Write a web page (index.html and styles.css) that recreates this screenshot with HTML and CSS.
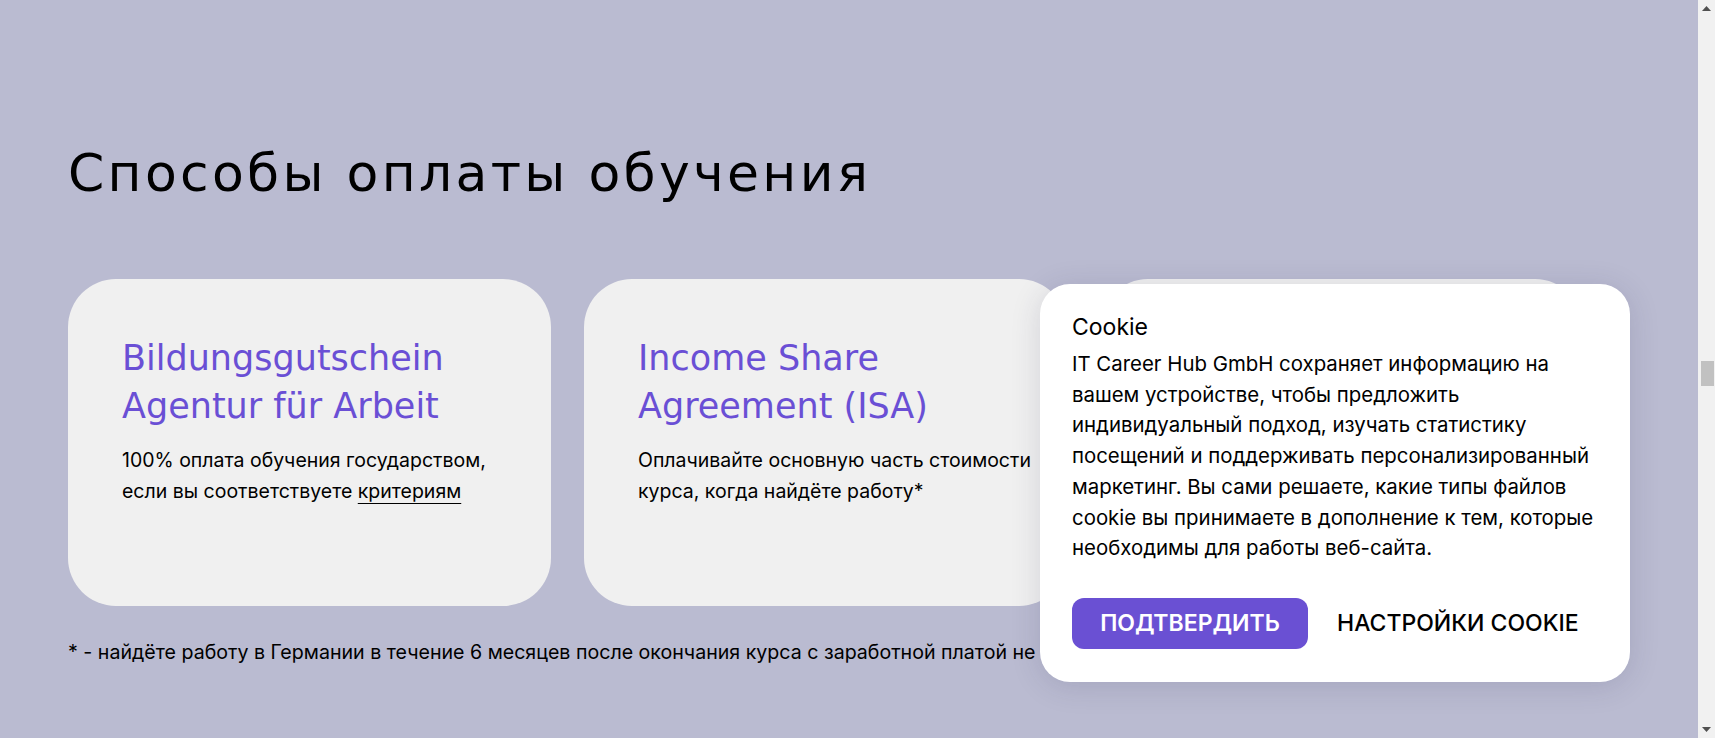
FILE: index.html
```html
<!DOCTYPE html>
<html lang="ru">
<head>
<meta charset="utf-8">
<title>Способы оплаты обучения</title>
<link rel="stylesheet" href="styles.css">
</head>
<body>
<div class="page">
  <main class="main">
    <h1 class="heading">Способы оплаты обучения</h1>
    <div class="cards">
      <div class="card">
        <h3 class="card-title">Bildungsgutschein Agentur für Arbeit</h3>
        <p class="card-text">100% оплата обучения государством, если вы соответствуете <a class="link" href="#">критериям</a></p>
      </div>
      <div class="card">
        <h3 class="card-title">Income Share Agreement (ISA)</h3>
        <p class="card-text">Оплачивайте основную часть стоимости курса, когда найдёте работу*</p>
      </div>
      <div class="card">
        <h3 class="card-title">Рассрочка от IT Career Hub</h3>
        <p class="card-text">Оплачивайте обучение частями без переплат</p>
      </div>
    </div>
    <p class="footnote">* - найдёте работу в Германии в течение 6 месяцев после окончания курса с заработной платой не менее 40 000 евро в год</p>

    <div class="cookie">
      <div class="cookie-title">Cookie</div>
      <p class="cookie-text">IT Career Hub GmbH сохраняет информацию на<br>
        вашем устройстве, чтобы предложить<br>
        индивидуальный подход, изучать статистику<br>
        посещений и поддерживать персонализированный<br>
        маркетинг. Вы сами решаете, какие типы файлов<br>
        cookie вы принимаете в дополнение к тем, которые<br>
        необходимы для работы веб-сайта.</p>
      <div class="cookie-actions">
        <button class="btn-primary">ПОДТВЕРДИТЬ</button>
        <button class="btn-link">НАСТРОЙКИ COOKIE</button>
      </div>
    </div>
  </main>
  <aside class="scrollbar">
    <div class="arrow"><svg width="9" height="5" viewBox="0 0 9 5"><path d="M0 5 L4.5 0 L9 5 Z" fill="#505050"/></svg></div>
    <div class="track"><div class="thumb"></div></div>
    <div class="arrow"><svg width="9" height="5" viewBox="0 0 9 5"><path d="M0 0 L9 0 L4.5 5 Z" fill="#505050"/></svg></div>
  </aside>
</div>
</body>
</html>
```

FILE: styles.css
```css
* { box-sizing: border-box; }
html, body {
  margin: 0;
  height: 738px;
  overflow: hidden;
}
body {
  font-family: Inter, "Noto Sans", sans-serif;
  color: #000;
}
.page {
  display: flex;
  height: 738px;
}
.main {
  flex: 1;
  position: relative;
  background: #babbd1;
  padding: 142px 0 0 68px;
  overflow: hidden;
}
.heading {
  margin: 0;
  font-family: "DejaVu Sans", sans-serif;
  font-weight: 400;
  font-size: 52px;
  line-height: 62px;
  letter-spacing: 3.3px;
}
.cards {
  display: grid;
  grid-template-columns: repeat(3, 483px);
  gap: 33px;
  margin-top: 75px;
}
.card {
  background: #f0f0f0;
  border-radius: 48px;
  height: 327px;
  padding: 55px 30px 0 54px;
}
.card-title {
  margin: 0;
  font-family: "DejaVu Sans", sans-serif;
  font-weight: 400;
  font-size: 35px;
  line-height: 48px;
  color: #6a4fd5;
}
.card-text {
  margin: 15px 0 0;
  font-size: 19.5px;
  line-height: 31px;
}
.link {
  color: #000;
  text-decoration: underline;
  text-underline-offset: 5px;
  text-decoration-thickness: 1px;
}
.footnote {
  margin: 34px 0 0;
  font-size: 19.6px;
  line-height: 24px;
  white-space: nowrap;
}
.cookie {
  position: absolute;
  right: 68px;
  bottom: 56px;
  width: 590px;
  height: 398px;
  background: #fff;
  border-radius: 30px;
  box-shadow: 0 4px 30px rgba(40, 40, 80, 0.15);
  padding: 29px 32px 33px;
}
.cookie-title {
  font-size: 23px;
  line-height: 28px;
}
.cookie-text {
  margin: 8px 0 0;
  font-size: 20.4px;
  line-height: 30.7px;
  white-space: nowrap;
}
.cookie-actions {
  display: flex;
  align-items: center;
  gap: 29px;
  margin-top: 34px;
}
.btn-primary {
  height: 51px;
  width: 236px;
  border: 0;
  border-radius: 12px;
  background: #6a50d3;
  color: #fff;
  font-family: Inter, sans-serif;
  font-weight: 600;
  font-size: 23px;
  padding: 0;
}
.btn-link {
  border: 0;
  background: none;
  padding: 0;
  font-family: Inter, sans-serif;
  font-weight: 500;
  font-size: 23px;
  color: #000;
}
.scrollbar {
  width: 17px;
  background: #f1f1f1;
  display: flex;
  flex-direction: column;
}
.arrow {
  height: 17px;
  display: flex;
  align-items: center;
  justify-content: center;
}
.arrow svg { display: block; }
.track {
  flex: 1;
  padding-top: 344px;
  display: flex;
  justify-content: center;
}
.thumb {
  width: 13px;
  margin-left: 2px;
  height: 25px;
  background: #c1c1c1;
}
```
